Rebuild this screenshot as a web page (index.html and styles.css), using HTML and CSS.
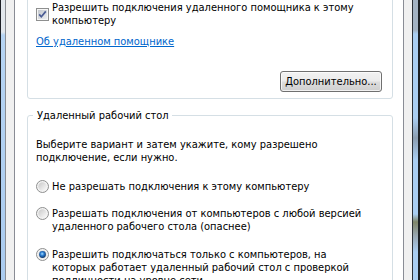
FILE: index.html
```html
<!DOCTYPE html>
<html lang="ru">
<head>
<meta charset="utf-8">
<title>Удаленный доступ</title>
<link rel="stylesheet" href="styles.css">
</head>
<body>
<div class="screen">
  <div class="frame-left"></div>
  <div class="dialog">
    <div class="page">
      <div class="group group-assist">
        <label class="check-row">
          <span class="checkbox">
            <svg width="13" height="13" viewBox="0 0 13 13">
              <defs>
                <linearGradient id="cbg" x1="0" y1="0" x2="1" y2="1">
                  <stop offset="0" stop-color="#c4c8ce"/>
                  <stop offset="1" stop-color="#eceef0"/>
                </linearGradient>
              </defs>
              <rect x="0.5" y="0.5" width="12" height="12" fill="#f6f6f6" stroke="#8e8f8f"/>
              <rect x="2" y="2" width="9" height="9" fill="url(#cbg)"/>
              <path d="M3.2 6.4 L5.3 8.8 L9.8 3.4" fill="none" stroke="#4a5c94" stroke-width="1.7"/>
            </svg>
          </span>
          <span class="label-text">Разрешить подключения удаленного помощника к этому<br>компьютеру</span>
        </label>
        <a class="link" href="#">Об удаленном помощнике</a>
        <div class="btn-row"><button class="btn" type="button">Дополнительно...</button></div>
      </div>

      <fieldset class="group group-rdp">
        <legend class="legend">Удаленный рабочий стол</legend>
        <p class="intro">Выберите вариант и затем укажите, кому разрешено<br>подключение, если нужно.</p>

        <label class="radio-row r1">
          <span class="radio">
            <svg width="13" height="13" viewBox="0 0 13 13">
              <defs>
                <linearGradient id="rgo" x1="0" y1="0" x2="1" y2="1">
                  <stop offset="0" stop-color="#c9c9c9"/>
                  <stop offset="1" stop-color="#fbfbfb"/>
                </linearGradient>
              </defs>
              <circle cx="6.5" cy="6.5" r="6" fill="#f3f3f3" stroke="#8e8f8f"/>
              <circle cx="6.5" cy="6.5" r="4.2" fill="url(#rgo)"/>
            </svg>
          </span>
          <span class="label-text">Не разрешать подключения к этому компьютеру</span>
        </label>

        <label class="radio-row r2">
          <span class="radio">
            <svg width="13" height="13" viewBox="0 0 13 13">
              <circle cx="6.5" cy="6.5" r="6" fill="#f3f3f3" stroke="#8e8f8f"/>
              <circle cx="6.5" cy="6.5" r="4.2" fill="url(#rgo)"/>
            </svg>
          </span>
          <span class="label-text">Разрешать подключения от компьютеров с любой версией<br>удаленного рабочего стола (опаснее)</span>
        </label>

        <label class="radio-row r3">
          <span class="radio">
            <svg width="13" height="13" viewBox="0 0 13 13">
              <defs>
                <radialGradient id="rsel" cx="0.45" cy="0.4" r="0.6">
                  <stop offset="0" stop-color="#a6e0ff"/>
                  <stop offset="0.45" stop-color="#2a7bd0"/>
                  <stop offset="1" stop-color="#0c3466"/>
                </radialGradient>
              </defs>
              <circle cx="6.5" cy="6.5" r="6" fill="#f3f3f3" stroke="#8e8f8f"/>
              <circle cx="6.5" cy="6.5" r="4.4" fill="#e6e6e6"/>
              <circle cx="6.5" cy="6.5" r="3.4" fill="url(#rsel)"/>
            </svg>
          </span>
          <span class="label-text">Разрешить подключаться только с компьютеров, на<br>которых работает удаленный рабочий стол с проверкой<br>подлинности на уровне сети</span>
        </label>
      </fieldset>
    </div>
  </div>
  <div class="frame-right"></div>
</div>
</body>
</html>
```

FILE: styles.css
```css
html, body {
  margin: 0;
  padding: 0;
}

body {
  width: 420px;
  height: 280px;
  overflow: hidden;
  font-family: "DejaVu Sans Condensed", "DejaVu Sans", sans-serif;
  font-stretch: condensed;
  font-size: 11px;
  line-height: 13px;
  color: #000;
}

.screen {
  display: flex;
  height: 280px;
}

.frame-left {
  width: 4px;
  border-left: 1px solid #1c1f24;
  border-right: 1px solid #8a8d92;
  background: linear-gradient(to bottom, #e2e7ec 0, #e2e7ec 32px, #b6d4f3 35px, #aacbef 100%);
}

.dialog {
  flex: 1;
  display: flex;
  background: #f0f0f0;
  padding: 0 8px;
}

.page {
  flex: 1;
  background: #fff;
  border-left: 1px solid #898c95;
  border-right: 1px solid #898c95;
  padding: 0 10px 0 12px;
}

.frame-right {
  width: 5px;
  border-left: 1px solid #2b2f35;
  border-right: 2px solid #1b1e22;
  background: linear-gradient(to bottom,
    #a3b2c2 0, #a3b2c2 30px, #a9cdf1 34px, #a9cdf1 118px,
    #8b9db0 138px, #a9cdf1 160px, #a9cdf1 214px,
    #7f8568 222px, #99a7b2 236px, #a9cdf1 252px, #a9cdf1 280px);
}

.group {
  border: 1px solid #d5dfe5;
  border-radius: 3px;
}

.group-assist {
  margin-top: -31px;
  padding: 31px 10px 6px 8px;
  display: flex;
  flex-direction: column;
  align-items: flex-start;
}

.check-row {
  display: flex;
  align-items: flex-start;
}

.checkbox {
  display: block;
  width: 13px;
  height: 13px;
  margin: 7px 3px 0 0;
  flex: none;
}

.checkbox svg,
.radio svg {
  display: block;
}

.link {
  margin-top: 8px;
  color: #0066cc;
  text-decoration: underline;
}

.btn-row {
  align-self: stretch;
  display: flex;
  justify-content: flex-end;
  margin-top: 23px;
}

.btn {
  width: 102px;
  height: 21px;
  margin: 0;
  padding: 0;
  border: 1px solid #707070;
  border-radius: 3px;
  background: linear-gradient(to bottom, #f2f2f2 0%, #ebebeb 48%, #dddddd 52%, #cfcfcf 100%);
  box-shadow: inset 0 0 0 1px rgba(255, 255, 255, 0.7);
  font: inherit;
  color: #000;
}

.group-rdp {
  margin: 10px 0 0 0;
  padding: 0 10px 6px 8px;
  min-width: 0;
}

.legend {
  margin-left: -3px;
  padding: 0 3px 0 4px;
  line-height: 13px;
}

.intro {
  margin: 16px 0 0 0;
}

.radio-row {
  display: flex;
  align-items: flex-start;
}

.radio {
  display: block;
  width: 13px;
  height: 13px;
  margin-right: 3px;
  flex: none;
}

.r1 { margin-top: 16px; }
.r2 { margin-top: 14px; }
.r3 { margin-top: 15px; }
```
